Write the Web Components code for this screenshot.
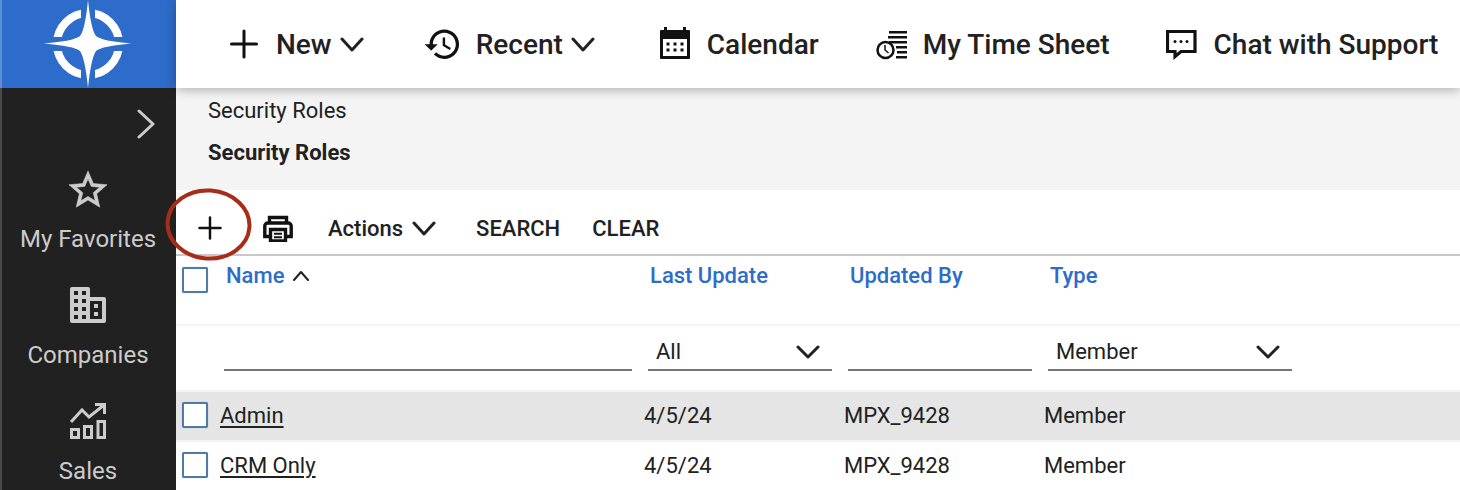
<!DOCTYPE html>
<html lang="en">
<head>
<meta charset="utf-8">
<title>Security Roles</title>
<style>
  html, body { margin: 0; padding: 0; height: 490px; overflow: hidden; background: #fff; }
  body { font-family: Roboto, "Liberation Sans", sans-serif; color: #212121; }
</style>
</head>
<body>
<app-shell>
  <side-nav slot="side">
    <nav-item label="My Favorites">
      <svg width="40" height="40" viewBox="1.500 1.500 21 21" fill="#ccc" stroke="#ccc" stroke-width=".3"><path d="M22 9.240l-7.190-.620L12 2 9.190 8.630 2 9.240l5.460 4.730L5.820 21 12 17.270 18.180 21l-1.630-7.030L22 9.240zM12 15.400l-3.760 2.270 1-4.280-3.320-2.880 4.380-.380L12 6.100l1.710 4.040 4.380.380-3.320 2.880 1 4.280L12 15.400z"/></svg>
    </nav-item>
    <nav-item label="Companies">
      <svg width="40" height="40" viewBox="-2 -1 40 40"><path fill="#ccc" fill-rule="evenodd" d="M2 0h16a2 2 0 0 1 2 2v8h14a2 2 0 0 1 2 2v22a2 2 0 0 1-2 2H2a2 2 0 0 1-2-2V2a2 2 0 0 1 2-2zM4 4v4h4V4zm8 0v4h4V4zM4 12v4h4v-4zm8 0v4h4v-4zM4 20v4h4v-4zm8 0v4h4v-4zM4 28v4h4v-4zm8 0v4h4v-4zm8-14v18h12V14zm4 3h4v4h-4zm0 8h4v4h-4z"/></svg>
    </nav-item>
    <nav-item label="Sales">
      <svg width="40" height="40" viewBox="-2 -1 40 40" fill="none" stroke="#ccc" stroke-width="3"><path d="M1 19L12 7l7 7L34 2"/><path d="M25 1.500h9.500V11"/><rect x="1.500" y="26.500" width="7" height="8"/><rect x="14.500" y="23.500" width="7" height="11"/><rect x="28" y="18.500" width="6.500" height="16"/></svg>
    </nav-item>
  </side-nav>

  <top-bar slot="top">
    <top-item menu>
      <svg slot="icon" width="46" height="36" viewBox="0 0 46 36" fill="none" stroke="#111" stroke-width="3" stroke-linecap="round"><path d="M14 5v26M1.500 18h25"/></svg>
      New
    </top-item>
    <top-item menu>
      <svg slot="icon" width="56" height="36" viewBox="0 0 56 36" fill="none"><g transform="translate(3 -1.500) scale(1.640)"><path fill="#111" d="M13 3c-4.970 0-9 4.030-9 9H1l3.890 3.890.07.140L9 12H6c0-3.870 3.130-7 7-7s7 3.130 7 7-3.130 7-7 7c-1.930 0-3.680-.790-4.940-2.060l-1.420 1.420C8.270 19.990 10.510 21 13 21c4.970 0 9-4.030 9-9s-4.030-9-9-9zm-1 5v5l4.280 2.540.720-1.210-3.500-2.080V8H12z"/></g></svg>
      Recent
    </top-item>
    <top-item>
      <svg slot="icon" width="56" height="36" viewBox="-1 0 56 36"><path fill="#111" fill-rule="evenodd" d="M12 1h3v3h16V1h3v3h3a1 1 0 0 1 1 1v27a1 1 0 0 1-1 1H9a1 1 0 0 1-1-1V5a1 1 0 0 1 1-1h3zM11 13v17h24V13z"/><g fill="#111"><rect x="14.500" y="16.500" width="3" height="3"/><rect x="21.500" y="16.500" width="3" height="3"/><rect x="28.500" y="16.500" width="3" height="3"/><rect x="14.500" y="22.500" width="3" height="3"/><rect x="21.500" y="22.500" width="3" height="3"/><rect x="28.500" y="22.500" width="3" height="3"/></g></svg>
      Calendar
    </top-item>
    <top-item>
      <svg slot="icon" width="48" height="36" viewBox="0 0 48 36"><g fill="#111"><rect x="14" y="5" width="18" height="2.500"/><rect x="13" y="10" width="19" height="2.500"/><rect x="14" y="15" width="18" height="2.500"/><rect x="21" y="20" width="11" height="2.500"/><rect x="22" y="25" width="10" height="2.500"/><rect x="21" y="30" width="11" height="2.500"/></g><circle cx="10.500" cy="24" r="8" fill="#fff" stroke="#111" stroke-width="2.500"/><path d="M10 19v5l3.500 3" fill="none" stroke="#111" stroke-width="1.500"/></svg>
      My Time Sheet
    </top-item>
    <top-item>
      <svg slot="icon" width="48" height="36" viewBox="0 0 48 36"><path fill="none" stroke="#111" stroke-width="3.200" stroke-linejoin="miter" d="M1.500 5.500h27.500v20H15l-6 5v-5H1.500z"/><g fill="#111"><circle cx="9" cy="15.500" r="1.500"/><circle cx="15" cy="15.500" r="1.500"/><circle cx="21" cy="15.500" r="1.500"/></g></svg>
      Chat with Support
    </top-item>
  </top-bar>

  <bread-crumbs slot="main" title-text="Security Roles">Security Roles</bread-crumbs>

  <tool-bar slot="main"></tool-bar>

  <role-table slot="main">
    <role-row name="Admin" date="4/5/24" by="MPX_9428" type="Member" selected></role-row>
    <role-row name="CRM Only" date="4/5/24" by="MPX_9428" type="Member"></role-row>
  </role-table>
</app-shell>

<script>
const chevron = (w, h, color = '#212121', sw = 3) =>
  `<svg width="${w}" height="${h}" viewBox="0 0 ${w} ${h}" fill="none" stroke="${color}" stroke-width="${sw}" stroke-linecap="round" stroke-linejoin="round"><path d="M2 2L${w / 2} ${h - 2}L${w - 2} 2"/></svg>`;

class AppShell extends HTMLElement {
  constructor () {
    super();
    this.attachShadow({ mode: 'open' }).innerHTML = `
<style>
  :host { display: flex; position: relative; width: 1460px; height: 490px; overflow: hidden; }
  .content { flex: 1; min-width: 0; display: flex; flex-direction: column; }
  /* the red mark somebody drew on the screenshot */
  .mark { position: absolute; left: 160px; top: 184px; }
</style>
<slot name="side"></slot>
<div class="content">
  <slot name="top"></slot>
  <slot name="main"></slot>
</div>
<svg class="mark" width="100" height="80" viewBox="0 0 100 80" fill="none"><ellipse cx="48.500" cy="40.500" rx="41" ry="34" stroke="#a72d18" stroke-width="4" transform="rotate(4 48.500 40.500)"/></svg>`;
  }
}
customElements.define('app-shell', AppShell);

class SideNav extends HTMLElement {
  constructor () {
    super();
    this.attachShadow({ mode: 'open' }).innerHTML = `
<style>
  :host { display: flex; flex-direction: column; width: 176px; height: 490px; flex: none; overflow: hidden; background: #212121; box-shadow: inset 2px 0 #4a4a4a; }
  .logo { height: 88px; flex: none; background: #2d6cca; box-shadow: inset 2px 0 #5d8ed8; }
  .logo svg { display: block; }
  .toggle { height: 82px; flex: none; box-sizing: border-box; padding: 21px 21px 0 0; display: flex; justify-content: flex-end; align-items: flex-start; }
</style>
<div class="logo">
  <svg width="176" height="88" viewBox="0 0 176 88">
    <defs><filter id="soft" x="-10%" y="-10%" width="120%" height="120%"><feGaussianBlur stdDeviation="0.500"/></filter></defs>
    <g filter="url(#soft)">
      <circle cx="88" cy="44" r="31" fill="none" stroke="#fff" stroke-width="8"/>
      <rect x="81" y="0" width="14" height="88" fill="#2d6cca"/>
      <rect x="44" y="37" width="88" height="14" fill="#2d6cca"/>
      <path fill="#fff" d="M88 0Q91 30 96 36Q102 41 131 43.500Q102 46 96 51Q91 58 88 88Q85 58 80 51Q74 46 44 43.500Q74 41 80 36Q85 30 88 0z"/>
    </g>
  </svg>
</div>
<div class="toggle">
  <svg width="18" height="30" viewBox="0 0 18 30" fill="none" stroke="#ccc" stroke-width="3" stroke-linecap="round" stroke-linejoin="round"><path d="M2 2l14 13L2 28"/></svg>
</div>
<slot></slot>`;
  }
}
customElements.define('side-nav', SideNav);

class NavItem extends HTMLElement {
  constructor () {
    super();
    this.attachShadow({ mode: 'open' }).innerHTML = `
<style>
  :host { display: flex; flex-direction: column; align-items: center; height: 116px; flex: none; color: #ccc; font-size: 24px; line-height: 28px; }
  .icon { height: 40px; margin-bottom: 15px; }
  ::slotted(svg) { display: block; }
</style>
<div class="icon"><slot></slot></div>
<div class="label"></div>`;
  }

  connectedCallback () {
    this.shadowRoot.querySelector('.label').textContent = this.getAttribute('label');
  }
}
customElements.define('nav-item', NavItem);

class TopBar extends HTMLElement {
  constructor () {
    super();
    this.attachShadow({ mode: 'open' }).innerHTML = `
<style>
  :host { display: flex; align-items: center; gap: 56px; height: 88px; flex: none; box-sizing: border-box; padding-left: 54px; background: #fff; box-shadow: 0 2px 10px rgba(0,0,0,.28); position: relative; z-index: 1; white-space: nowrap; }
</style>
<slot></slot>`;
  }
}
customElements.define('top-bar', TopBar);

class TopItem extends HTMLElement {
  constructor () {
    super();
    this.attachShadow({ mode: 'open' }).innerHTML = `
<style>
  :host { display: flex; align-items: center; font-size: 28px; font-weight: 500; color: #212121; }
  :host([menu]) .caret { display: block; margin-left: 8px; }
  .caret { display: none; line-height: 0; }
  ::slotted(svg) { display: block; flex: none; }
</style>
<slot name="icon"></slot><slot></slot><span class="caret">${chevron(24, 15)}</span>`;
  }
}
customElements.define('top-item', TopItem);

class BreadCrumbs extends HTMLElement {
  constructor () {
    super();
    this.attachShadow({ mode: 'open' }).innerHTML = `
<style>
  :host { display: block; height: 102px; flex: none; box-sizing: border-box; padding: 10px 0 0 32px; background: #f4f4f4; font-size: 22px; line-height: 26px; color: #212121; }
  .title { margin-top: 16px; font-weight: 700; }
</style>
<div><slot></slot></div>
<div class="title"></div>`;
  }

  connectedCallback () {
    this.shadowRoot.querySelector('.title').textContent = this.getAttribute('title-text');
  }
}
customElements.define('bread-crumbs', BreadCrumbs);

class ToolBar extends HTMLElement {
  constructor () {
    super();
    this.attachShadow({ mode: 'open' }).innerHTML = `
<style>
  :host { display: flex; align-items: center; height: 66px; flex: none; box-sizing: border-box; border-bottom: 2px solid #c8c8c8; padding: 12px 0 0 22px; font-size: 22px; font-weight: 500; color: #212121; white-space: nowrap; }
  svg { display: block; flex: none; }
  .print { margin-left: 41px; }
  .actions { margin-left: 35px; }
  .caret { margin-left: 9px; }
  .search { margin-left: 40px; }
  .clear { margin-left: 32px; }
</style>
<svg width="24" height="24" viewBox="0 0 24 24" fill="none" stroke="#111" stroke-width="2.500" stroke-linecap="round"><path d="M12 1.500v21M1.500 12h21"/></svg>
<svg class="print" width="30" height="28" viewBox="0 -2 30 28" fill="none" stroke="#111" stroke-width="3.400"><path d="M6.500 7V1.500h17V7"/><path d="M6 20.500H1.800V10a3 3 0 0 1 3-3h20.400a3 3 0 0 1 3 3v10.500H24"/><path d="M7.500 13.500h15v11.500h-15z"/><path d="M11 17.800h8M11 21.200h8" stroke-width="2"/></svg>
<span class="actions">Actions</span>
<span class="caret">${chevron(24, 15)}</span>
<span class="search">SEARCH</span>
<span class="clear">CLEAR</span>`;
  }
}
customElements.define('tool-bar', ToolBar);

class CheckBox extends HTMLElement {
  constructor () {
    super();
    this.attachShadow({ mode: 'open' }).innerHTML = `
<style>
  :host { display: block; box-sizing: border-box; width: 26px; height: 26px; border: 2px solid #4f7aa6; border-radius: 2px; background: #fff; box-shadow: 0 0 1px #7f9fc0; }
</style>`;
  }
}
customElements.define('check-box', CheckBox);

class FilterField extends HTMLElement {
  constructor () {
    super();
    this.attachShadow({ mode: 'open' }).innerHTML = `
<style>
  :host { display: flex; align-items: center; justify-content: space-between; box-sizing: border-box; height: 36px; padding: 0 12px 0 8px; border-bottom: 2px solid #757575; font-size: 22px; color: #212121; }
  slot { display: block; margin-top: -2px; }
  .caret { display: none; line-height: 0; }
  :host([select]) .caret { display: block; }
</style>
<slot></slot><span class="caret">${chevron(24, 14)}</span>`;
  }
}
customElements.define('filter-field', FilterField);

const COLUMNS = 'grid-template-columns: 44px 424px 200px 200px 1fr;';

class RoleTable extends HTMLElement {
  constructor () {
    super();
    this.attachShadow({ mode: 'open' }).innerHTML = `
<style>
  :host { display: block; font-size: 22px; }
  .head, .filters { display: grid; ${COLUMNS} border-bottom: 2px solid #f4f4f4; }
  .head { height: 68px; color: #2d6cca; font-weight: 500; }
  .head check-box { margin: 11px 0 0 6px; }
  .cell { padding: 7px 0 0 6px; line-height: 26px; }
  .sort { display: flex; align-items: flex-start; }
  .sort svg { display: block; margin: 7px 0 0 9px; }
  .filters { height: 64px; }
  .filters filter-field { margin: 9px 12px 0 4px; }
  .filters .wide { width: 244px; }
</style>
<div class="head">
  <check-box></check-box>
  <div class="cell sort">Name<svg width="16" height="11" viewBox="0 0 16 11" fill="none" stroke="#212121" stroke-width="2" stroke-linecap="round" stroke-linejoin="round"><path d="M1 10l7-8 7 8"/></svg></div>
  <div class="cell">Last Update</div>
  <div class="cell">Updated By</div>
  <div class="cell">Type</div>
</div>
<div class="filters">
  <div></div>
  <filter-field></filter-field>
  <filter-field select>All</filter-field>
  <filter-field></filter-field>
  <filter-field class="wide" select>Member</filter-field>
</div>
<slot></slot>`;
  }
}
customElements.define('role-table', RoleTable);

class RoleRow extends HTMLElement {
  constructor () {
    super();
    this.attachShadow({ mode: 'open' }).innerHTML = `
<style>
  :host { display: grid; ${COLUMNS} align-items: center; height: 48px; border-bottom: 2px solid #f4f4f4; font-size: 22px; color: #212121; }
  :host([selected]) { background: #e5e5e5; }
  check-box { margin: -2px 0 0 6px; }
  span { margin-top: -2px; }
  a { color: inherit; text-decoration: underline; text-underline-offset: 3px; }
</style>
<check-box></check-box>
<span><a href="#" class="name"></a></span>
<span class="date"></span>
<span class="by"></span>
<span class="type"></span>`;
  }

  connectedCallback () {
    for (const key of ['name', 'date', 'by', 'type']) {
      this.shadowRoot.querySelector('.' + key).textContent = this.getAttribute(key);
    }
  }
}
customElements.define('role-row', RoleRow);
</script>
</body>
</html>
